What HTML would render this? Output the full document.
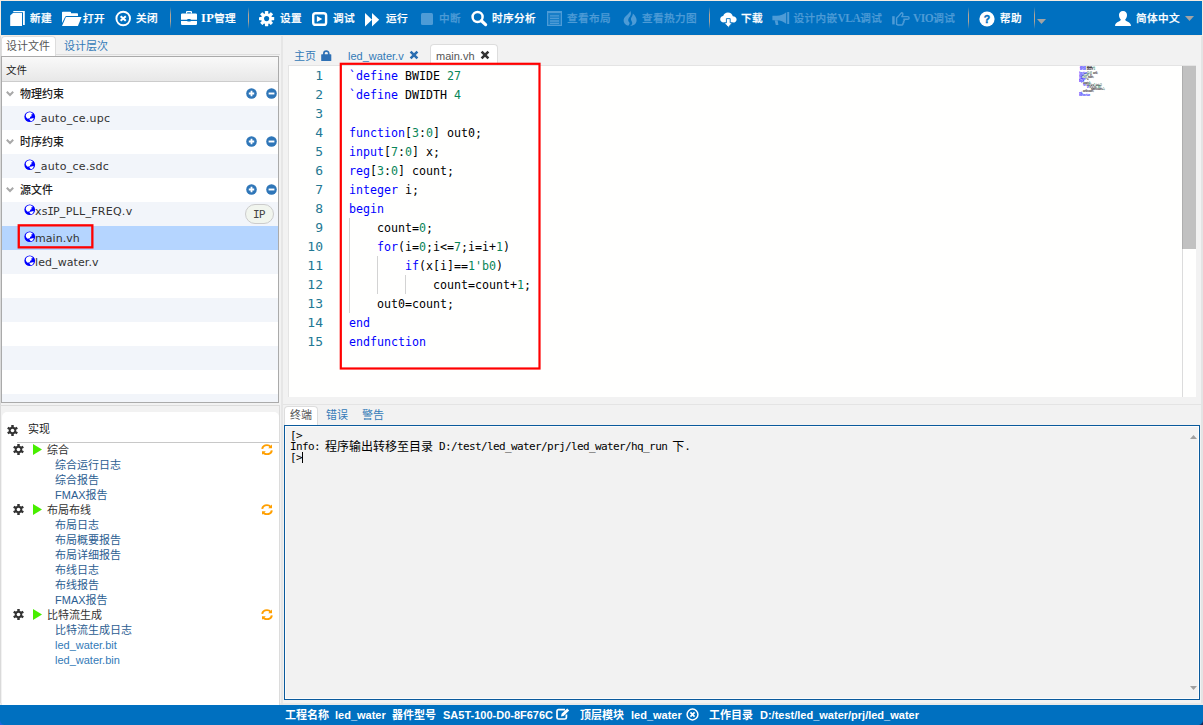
<!DOCTYPE html>
<html lang="zh-CN">
<head>
<meta charset="utf-8">
<title>IDE</title>
<style>
*{box-sizing:border-box;margin:0;padding:0}
html,body{width:1203px;height:725px;overflow:hidden;background:#f2f2f2}
body{position:relative;font-family:"Liberation Sans","Noto Sans CJK SC",sans-serif;font-size:11px;color:#222}
.abs{position:absolute}
.t{position:absolute;white-space:nowrap;line-height:14px;height:14px}
/* toolbar */
#tb{position:absolute;left:1px;top:1px;width:1201px;height:34px;background:#0070c0}
#tb .t{color:#fff;font-weight:500;top:10px;font-size:10.6px;letter-spacing:0.4px;-webkit-text-stroke:0.25px #fff}
#tb .t.dis{-webkit-text-stroke:0.25px #4d9bd6}
#tb .t.dis{color:#4d9bd6}
#tb .sep{position:absolute;top:6px;width:1px;height:22px;background:linear-gradient(rgba(179,165,149,0),#b3a595 35%,#b3a595 65%,rgba(179,165,149,0))}
#tb svg{position:absolute;overflow:visible}
.serif{font-family:"Liberation Serif",serif}
/* left top */
#ltab1{left:1px;top:36px;width:55px;height:21px;background:#fff;border:1px solid #ddd;border-bottom:none;border-radius:4px 4px 0 0}
.link{color:#337ab7}
#fp{left:1px;top:56px;width:278px;height:347px;border:1px solid #aaa;background:#fff;overflow:hidden}
#fp .hd{position:absolute;left:0;top:0;width:100%;height:25px;background:linear-gradient(#f9f9f9,#e8e8e8);border-bottom:1px solid #ccc}
#fp .row{position:absolute;left:0;width:100%;height:24px}
#fp .alt{background:#f2f5fa}
#fp .sel{background:#b5d5ff}
#fp .g{position:absolute;left:18px;top:5px;font-weight:500;color:#222}
#fp .f{position:absolute;top:6px;letter-spacing:0.28px;font-family:"DejaVu Sans","Noto Sans CJK SC",sans-serif;font-size:11px;color:#333;white-space:nowrap;line-height:14px}
#fp svg{position:absolute}
/* impl */
#ip{left:2px;top:412px;width:277px;height:295px;background:#fff;border-radius:5px 5px 0 0}
#ip .t{font-size:11px}
.dk{color:#2b5d91}
/* editor */
#ed{left:289px;top:66px;width:907px;height:331px;background:#fffffe;overflow:hidden}
.ln{position:absolute;left:0;width:34px;text-align:right;color:#237893}
.code,.ln{font-family:"DejaVu Sans Mono","Liberation Mono",monospace;font-size:13px;line-height:19px;height:19px;white-space:pre}
.code{position:absolute;left:60px;color:#000;transform-origin:0 0;transform:scaleX(0.8944)}
.mm{transform:scale(0.128,0.2) !important;line-height:13px;height:13px;font-weight:bold}
.vi{font-family:"DejaVu Sans Mono",monospace;letter-spacing:-0.9px;margin-left:-0.6px}
.k{color:#0000ff}.n{color:#098658}
.ig{position:absolute;width:1px;background:#d3d3d3}
/* terminal */
#term{left:284px;top:425px;width:916px;height:275px;border:1px solid #0a5a9c;background:#f2f2f2;box-shadow:inset 0 0 0 1px #fcfcfc}
.tm{position:absolute;left:5px;font-family:"DejaVu Sans Mono","Noto Sans CJK SC",monospace;font-size:11px;letter-spacing:-0.62px;line-height:11px;height:11px;white-space:pre;color:#000}
.tm .c{font-size:12px;letter-spacing:0;margin-left:-1px;font-weight:400;line-height:11px;font-family:"Noto Sans CJK SC",sans-serif;display:inline-block;vertical-align:top;height:11px;margin-top:-1px}
/* status */
#sb{left:0;top:705px;width:1203px;height:20px;background:#0070c0}
#sb .t{color:#fff;font-weight:bold;top:3px}
</style>
</head>
<body>
<svg width="0" height="0" style="position:absolute"><defs><g id="globe"><circle cx="6" cy="6" r="5.6" fill="#0000ff"/><path d="M2,3.9 C2.6,2 4.6,1 6.5,1.3 C7.8,1.5 8.8,2.3 9.3,3.2 L7.3,3.9 L8.2,5.1 L6.5,6.1 L6.1,7.6 L3.7,8 C2.2,7 1.5,5.4 2,3.9 z M5.5,8.4 L10.1,7.3 C10,9.1 8.8,10.4 7,10.8 z" fill="#fff"/></g></defs></svg>
<!-- outer frame -->
<div class="abs" style="left:0;top:0;width:1203px;height:1px;background:#f5ebe1"></div>
<div class="abs" style="left:0;top:0;width:1px;height:36px;background:#f5ebe1"></div>
<div class="abs" style="left:0;top:36px;width:1px;height:669px;background:#dadada"></div>
<div class="abs" style="left:1202px;top:0;width:1px;height:36px;background:#f5ebe1"></div>
<div class="abs" style="left:1px;top:35px;width:1201px;height:1px;background:#f5ebe1"></div>
<div class="abs" style="left:1201px;top:36px;width:2px;height:669px;background:#e4e4e4"></div>
<div class="abs" style="left:0;top:703px;width:1203px;height:2px;background:#e9e9e9"></div>
<div class="abs" style="left:282px;top:404px;width:919px;height:1px;background:#e4e4e4"></div>

<div id="tb">
<!-- new -->
<svg style="left:9px;top:10px" width="16" height="16" viewBox="0 0 16 16"><path d="M3.3,0 H14.8 V14 H13 V1.3 H3.3 z" fill="#fff"/><path d="M0.2,4.6 L3,2.1 H12 V15 H0.2 z" fill="#fff"/></svg>
<div class="t" style="left:29px">新建</div>
<!-- open -->
<svg style="left:60px;top:10px" width="22" height="16" viewBox="0 0 22 16"><path d="M1,1.6 Q1,0.8 1.8,0.8 H9.2 Q10,0.8 10,1.6 V2.3 H16.2 Q17,2.3 17,3.1 V4.9 H5.6 Q4.6,4.9 4.2,5.7 L1,12 z" fill="#fff"/><path d="M4.9,6 H20.6 L16.9,15 H1 z" fill="#fff"/></svg>
<div class="t" style="left:82px">打开</div>
<!-- close -->
<svg style="left:114px;top:10px" width="17" height="16" viewBox="0 0 17 16"><circle cx="8.2" cy="7.5" r="6.8" fill="none" stroke="#fff" stroke-width="1.9"/><path d="M5.6,5.3 L10.8,9.7 M10.8,5.3 L5.6,9.7" stroke="#fff" stroke-width="2.1" fill="none"/></svg>
<div class="t" style="left:135px">关闭</div>
<div class="sep" style="left:169px"></div>
<!-- briefcase -->
<svg style="left:180px;top:10px" width="16" height="15" viewBox="0 0 16 15"><path d="M5,2.6 V1 Q5,0 6,0 H10 Q11,0 11,1 V2.6 H9.8 V1.2 H6.2 V2.6 z" fill="#fff"/><path d="M1.2,2.4 H14.8 Q16,2.4 16,3.6 V8.8 H9.6 V8 H6.4 V8.8 H0 V3.6 Q0,2.4 1.2,2.4 z" fill="#fff"/><path d="M0,10 H6.4 V10.6 H9.6 V10 H16 V12.8 Q16,14 14.8,14 H1.2 Q0,14 0,12.8 z" fill="#fff"/></svg>
<div class="t" style="left:200px"><span class="serif" style="font-size:12.5px;font-weight:bold;letter-spacing:0.3px;-webkit-text-stroke:0">IP</span>管理</div>
<div class="sep" style="left:247px"></div>
<!-- gear -->
<svg style="left:258.3px;top:10px" width="15.2" height="15.2" viewBox="-8 -8 16 16"><g fill="#fff"><circle r="5.7"/><rect x="-1.75" y="-8" width="3.5" height="16" rx="0.5"/><rect x="-1.75" y="-8" width="3.5" height="16" rx="0.5" transform="rotate(45)"/><rect x="-1.75" y="-8" width="3.5" height="16" rx="0.5" transform="rotate(90)"/><rect x="-1.75" y="-8" width="3.5" height="16" rx="0.5" transform="rotate(135)"/></g><circle r="2.7" fill="#0070c0"/></svg>
<div class="t" style="left:279px">设置</div>
<!-- debug -->
<svg style="left:311px;top:11px" width="16" height="14" viewBox="0 0 16 14"><rect x="1.2" y="1.2" width="12.9" height="11.6" rx="2.4" fill="none" stroke="#fff" stroke-width="2.4"/><path d="M4.9,3.9 L10.3,7 L4.9,10.1 z" fill="#fff"/></svg>
<div class="t" style="left:332px">调试</div>
<!-- run -->
<svg style="left:364px;top:11px" width="15" height="15" viewBox="0 0 15 15"><path d="M0,1 L7,7.7 L0,14.4 z M7,1 L14.2,7.7 L7,14.4 z" fill="#fff"/></svg>
<div class="t" style="left:385px">运行</div>
<!-- stop -->
<svg style="left:420px;top:12px" width="12" height="12" viewBox="0 0 12 12"><rect x="0" y="0" width="12" height="12" rx="1.5" fill="#4d9bd6"/></svg>
<div class="t dis" style="left:438px">中断</div>
<!-- search -->
<svg style="left:470px;top:10px" width="17" height="16" viewBox="0 0 17 16"><circle cx="6.6" cy="6" r="5" fill="none" stroke="#fff" stroke-width="2.5"/><path d="M10.4,9.8 L14.6,13.6" stroke="#fff" stroke-width="3.2" stroke-linecap="round"/></svg>
<div class="t" style="left:491px">时序分析</div>
<!-- layout -->
<svg style="left:546px;top:10px" width="15" height="15" viewBox="0 0 15 15"><rect x="0.6" y="0.6" width="13.8" height="13.8" fill="rgba(77,155,214,0.3)" stroke="#4d9bd6" stroke-width="1.2"/><rect x="0" y="0" width="15" height="2" fill="#4d9bd6"/><path d="M3,4.8 H12 M3,7.4 H12 M3,10 H12 M3,12.4 H12" stroke="#4d9bd6" stroke-width="1.3"/></svg>
<div class="t dis" style="left:566px">查看布局</div>
<!-- flame -->
<svg style="left:621.5px;top:10px" width="14" height="15" viewBox="0 0 14 15"><path d="M7.4,0 C8.8,2.6 7.6,4.8 6,6.8 C4.8,8.4 5,10.2 6.4,11.6 C6.9,12.6 6.4,13.8 5.2,14.7 C2.4,14 0.4,11.8 0.6,9 C0.8,6.2 3.2,5 4.8,3.2 C5.8,2.2 6.6,1.2 7.4,0 z" fill="#4d9bd6"/><path d="M9.8,2.4 C12.2,4.4 13.8,7 13.6,9.8 C13.4,12.8 10.6,14.9 7,15 C9.2,13.6 9.8,12 8.8,10.4 C7.8,9 7.6,7.6 8.6,6 C9.4,4.8 9.9,3.6 9.8,2.4 z" fill="#4d9bd6"/></svg>
<div class="t dis" style="left:641px">查看热力图</div>
<div class="sep" style="left:708px"></div>
<!-- cloud download -->
<svg style="left:719px;top:10.9px" width="17" height="16" viewBox="0 0 17 16"><path d="M4,10.6 C1.6,10.6 0.2,9 0.2,7.2 C0.2,5.4 1.5,4.1 3.2,3.9 C3.8,1.7 5.7,0.4 7.9,0.4 C10.4,0.4 12.3,2 12.8,4.2 C15,4.3 16.6,5.6 16.6,7.5 C16.6,9.4 15.1,10.6 13,10.6 z" fill="#fff"/><path d="M6.4,6.6 H10.2 V10.8 H12.4 L8.3,15.4 L4.2,10.8 H6.4 z" fill="#fff" stroke="#0070c0" stroke-width="0.9"/></svg>
<div class="t" style="left:740px">下载</div>
<!-- megaphone -->
<svg style="left:771px;top:11px" width="18" height="14" viewBox="0 0 18 14"><path d="M0.4,3.8 H4.6 C8.6,3.6 11.8,2.2 14.2,0.2 V11.8 C11.8,9.8 8.6,8.4 4.6,8.2 H0.4 z" fill="#4d9bd6"/><path d="M2.6,8.2 L3.8,13 H6.4 L5.6,8.2 z" fill="#4d9bd6"/><rect x="15.2" y="0" width="2" height="12" fill="#4d9bd6"/></svg>
<div class="t dis" style="left:792.5px">设计内嵌<span class="serif" style="font-size:11.5px;font-weight:bold;letter-spacing:-0.5px;-webkit-text-stroke:0">VLA</span>调试</div>
<!-- hand -->
<svg style="left:891px;top:11px" width="18" height="14" viewBox="0 0 18 14"><rect x="0.2" y="4.2" width="2.5" height="8.2" fill="#4d9bd6"/><path d="M4.6,6 C6.2,5 7.6,2.6 9.6,0.8 C11.4,1 11.2,2.8 9.8,4.6 H15.6 C17.6,4.6 17.6,7.2 15.6,7.2 H11.8 C12.8,7.6 12.6,9.2 11.4,9.3 C12.2,9.9 11.8,11.3 10.8,11.3 C11.3,12 10.8,13 9.8,13 H6.6 C5.8,13 5.2,12.5 4.6,12.3 z" fill="none" stroke="#4d9bd6" stroke-width="1.4" stroke-linejoin="round"/></svg>
<div class="t dis" style="left:912px"><span class="serif" style="font-size:11.5px;font-weight:bold;letter-spacing:-0.5px;-webkit-text-stroke:0">VIO</span>调试</div>
<div class="sep" style="left:967px"></div>
<!-- help -->
<svg style="left:978px;top:9.6px" width="16" height="16" viewBox="0 0 16 16"><circle cx="8" cy="8" r="7.6" fill="#fff"/><text x="8" y="12" text-anchor="middle" font-family="Liberation Sans, sans-serif" font-weight="bold" font-size="10.5" fill="#0070c0" stroke="#0070c0" stroke-width="0.4">?</text></svg>
<div class="t" style="left:999px">帮助</div>
<div class="sep" style="left:1033px"></div>
<svg style="left:1036px;top:18px" width="9" height="5" viewBox="0 0 9 5"><path d="M0,0 H9 L4.5,5 z" fill="#a3a3a3"/></svg>
<!-- user -->
<svg style="left:1114px;top:10px" width="16" height="15" viewBox="0 0 16 15"><path d="M8,0 C10.6,0 12,1.7 12,4.1 C12,6.1 11.1,7.7 10.2,8.5 C10.2,9.4 10.7,9.8 12.2,10.5 C14.5,11.5 15.8,12.4 16,15 H0 C0.2,12.4 1.5,11.5 3.8,10.5 C5.3,9.8 5.8,9.4 5.8,8.5 C4.9,7.7 4,6.1 4,4.1 C4,1.7 5.4,0 8,0 z" fill="#fff"/></svg>
<div class="t" style="left:1135px">简体中文</div>
<svg style="left:1184px;top:15px" width="9" height="5" viewBox="0 0 9 5"><path d="M0,0 H9 L4.5,5 z" fill="#a3a3a3"/></svg>
</div>


<!-- left top tabs -->
<div id="ltab1" class="abs"></div>
<div class="t" style="left:6px;top:39px;color:#555">设计文件</div>
<div class="t link" style="left:64px;top:39px">设计层次</div>

<div id="fp" class="abs">
<div class="hd"><div class="t" style="left:4px;top:6px;color:#222;font-size:10.5px">文件</div></div>
<div class="row" style="top:25px"><svg class="chev" style="left:3.5px;top:9px" width="8" height="6" viewBox="0 0 8 6"><path d="M0.8,0.8 L4,4 L7.2,0.8" fill="none" stroke="#a8a8a8" stroke-width="2"/></svg><div class="g t">物理约束</div><svg style="left:244px;top:6px" width="11" height="11" viewBox="0 0 11 11"><circle cx="5.5" cy="5.5" r="5.3" fill="#2f76b8"/><path d="M5.5,2.8 V8.2 M2.8,5.5 H8.2" stroke="#fff" stroke-width="1.8"/></svg><svg style="left:264px;top:6px" width="11" height="11" viewBox="0 0 11 11"><circle cx="5.5" cy="5.5" r="5.3" fill="#2f76b8"/><path d="M2.6,5.5 H8.4" stroke="#fff" stroke-width="1.9"/></svg></div>
<div class="row alt" style="top:49px"><svg style="left:22px;top:5.3px" width="11.5" height="11.5" viewBox="0 0 12 12"><use href="#globe"/></svg><div class="f" style="left:33px">_auto_ce.upc</div></div>
<div class="row" style="top:73px"><svg class="chev" style="left:3.5px;top:9px" width="8" height="6" viewBox="0 0 8 6"><path d="M0.8,0.8 L4,4 L7.2,0.8" fill="none" stroke="#a8a8a8" stroke-width="2"/></svg><div class="g t">时序约束</div><svg style="left:244px;top:6px" width="11" height="11" viewBox="0 0 11 11"><circle cx="5.5" cy="5.5" r="5.3" fill="#2f76b8"/><path d="M5.5,2.8 V8.2 M2.8,5.5 H8.2" stroke="#fff" stroke-width="1.8"/></svg><svg style="left:264px;top:6px" width="11" height="11" viewBox="0 0 11 11"><circle cx="5.5" cy="5.5" r="5.3" fill="#2f76b8"/><path d="M2.6,5.5 H8.4" stroke="#fff" stroke-width="1.9"/></svg></div>
<div class="row alt" style="top:97px"><svg style="left:22px;top:5.3px" width="11.5" height="11.5" viewBox="0 0 12 12"><use href="#globe"/></svg><div class="f" style="left:33px">_auto_ce.sdc</div></div>
<div class="row" style="top:121px"><svg class="chev" style="left:3.5px;top:9px" width="8" height="6" viewBox="0 0 8 6"><path d="M0.8,0.8 L4,4 L7.2,0.8" fill="none" stroke="#a8a8a8" stroke-width="2"/></svg><div class="g t">源文件</div><svg style="left:244px;top:6px" width="11" height="11" viewBox="0 0 11 11"><circle cx="5.5" cy="5.5" r="5.3" fill="#2f76b8"/><path d="M5.5,2.8 V8.2 M2.8,5.5 H8.2" stroke="#fff" stroke-width="1.8"/></svg><svg style="left:264px;top:6px" width="11" height="11" viewBox="0 0 11 11"><circle cx="5.5" cy="5.5" r="5.3" fill="#2f76b8"/><path d="M2.6,5.5 H8.4" stroke="#fff" stroke-width="1.9"/></svg></div>
<div class="row alt" style="top:145px"><svg style="left:22px;top:2.3px" width="11.5" height="11.5" viewBox="0 0 12 12"><use href="#globe"/></svg><div class="f" style="left:33px;top:3px">xs<span class="vi">I</span>P_PLL_FREQ.v</div><div class="abs" style="left:243px;top:2px;width:29px;height:20px;border:1px solid #ccc;border-radius:10px;background:#f1f5ee;font-family:'DejaVu Sans',sans-serif;font-size:11px;line-height:20px;text-align:center;color:#444"><span class="vi">I</span>P</div></div>
<div class="row sel" style="top:169px"><svg style="left:22px;top:5.3px" width="11.5" height="11.5" viewBox="0 0 12 12"><use href="#globe"/></svg><div class="f" style="left:33px;letter-spacing:0.05px">main.vh</div></div>
<div class="row alt" style="top:193px"><svg style="left:22px;top:5.3px" width="11.5" height="11.5" viewBox="0 0 12 12"><use href="#globe"/></svg><div class="f" style="left:33px;letter-spacing:0.09px">led_water.v</div></div>
<div class="row alt" style="top:241px"></div>
<div class="row alt" style="top:289px"></div>
<div class="row alt" style="top:337px"></div>
<svg class="abs" style="left:8px;top:160px" width="100" height="40" viewBox="10 217 100 40"><rect x="18.75" y="225.35" width="73.6" height="22" fill="none" stroke="#ff0000" stroke-width="2.3"/></svg>
</div>


<!-- splitters -->
<div class="abs" style="left:281px;top:36px;width:2px;height:669px;background:#e6e6e6"></div>
<div class="abs" style="left:56px;top:54px;width:224px;height:1px;background:#dedede"></div>
<div class="abs" style="left:0;top:405px;width:280px;height:1px;background:#dcdcdc"></div>

<div id="ip" class="abs">
<svg style="position:absolute;left:5px;top:13px" width="11" height="11" viewBox="-8 -8 16 16"><g fill="#333"><circle r="5.4"/><rect x="-1.8" y="-8" width="3.6" height="16"/><rect x="-1.8" y="-8" width="3.6" height="16" transform="rotate(60)"/><rect x="-1.8" y="-8" width="3.6" height="16" transform="rotate(120)"/></g><circle r="2.6" fill="#fff"/></svg>
<div class="t" style="left:26px;top:10px;color:#222">实现</div>
<div class="abs" style="left:15px;top:30px;width:263px;height:1px;background:#c8c8c8"></div>
<svg style="position:absolute;left:11px;top:32px" width="11" height="11" viewBox="-8 -8 16 16"><g fill="#333"><circle r="5.4"/><rect x="-1.8" y="-8" width="3.6" height="16"/><rect x="-1.8" y="-8" width="3.6" height="16" transform="rotate(60)"/><rect x="-1.8" y="-8" width="3.6" height="16" transform="rotate(120)"/></g><circle r="2.6" fill="#fff"/></svg>
<svg style="position:absolute;left:31px;top:32px" width="9" height="11" viewBox="0 0 9 11"><path d="M0,0 L9,5.5 L0,11 z" fill="#48ee00"/></svg>
<div class="t" style="left:45px;top:31px;color:#333">综合</div>
<svg style="position:absolute;left:259px;top:32px" width="12" height="11.4" viewBox="0 0 12 12" preserveAspectRatio="none"><g fill="none" stroke="#ff9f00" stroke-width="2"><path d="M1.2,5.2 C1.6,2.8 3.6,1.2 6,1.2 C7.6,1.2 8.8,1.9 9.7,3"/><path d="M10.8,6.8 C10.4,9.2 8.4,10.8 6,10.8 C4.4,10.8 3.2,10.1 2.3,9"/></g><path d="M11,0.6 V4.4 H7.2 z" fill="#ff9f00"/><path d="M1,11.4 V7.6 H4.8 z" fill="#ff9f00"/></svg>
<div class="t dk" style="left:53px;top:46px">综合运行日志</div>
<div class="t dk" style="left:53px;top:61px">综合报告</div>
<div class="t dk" style="left:53px;top:76px">FMAX报告</div>
<svg style="position:absolute;left:11px;top:92px" width="11" height="11" viewBox="-8 -8 16 16"><g fill="#333"><circle r="5.4"/><rect x="-1.8" y="-8" width="3.6" height="16"/><rect x="-1.8" y="-8" width="3.6" height="16" transform="rotate(60)"/><rect x="-1.8" y="-8" width="3.6" height="16" transform="rotate(120)"/></g><circle r="2.6" fill="#fff"/></svg>
<svg style="position:absolute;left:31px;top:92px" width="9" height="11" viewBox="0 0 9 11"><path d="M0,0 L9,5.5 L0,11 z" fill="#48ee00"/></svg>
<div class="t" style="left:45px;top:91px;color:#333">布局布线</div>
<svg style="position:absolute;left:259px;top:92px" width="12" height="11.4" viewBox="0 0 12 12" preserveAspectRatio="none"><g fill="none" stroke="#ff9f00" stroke-width="2"><path d="M1.2,5.2 C1.6,2.8 3.6,1.2 6,1.2 C7.6,1.2 8.8,1.9 9.7,3"/><path d="M10.8,6.8 C10.4,9.2 8.4,10.8 6,10.8 C4.4,10.8 3.2,10.1 2.3,9"/></g><path d="M11,0.6 V4.4 H7.2 z" fill="#ff9f00"/><path d="M1,11.4 V7.6 H4.8 z" fill="#ff9f00"/></svg>
<div class="t dk" style="left:53px;top:106px">布局日志</div>
<div class="t dk" style="left:53px;top:121px">布局概要报告</div>
<div class="t dk" style="left:53px;top:136px">布局详细报告</div>
<div class="t dk" style="left:53px;top:151px">布线日志</div>
<div class="t dk" style="left:53px;top:166px">布线报告</div>
<div class="t dk" style="left:53px;top:181px">FMAX报告</div>
<svg style="position:absolute;left:11px;top:197px" width="11" height="11" viewBox="-8 -8 16 16"><g fill="#333"><circle r="5.4"/><rect x="-1.8" y="-8" width="3.6" height="16"/><rect x="-1.8" y="-8" width="3.6" height="16" transform="rotate(60)"/><rect x="-1.8" y="-8" width="3.6" height="16" transform="rotate(120)"/></g><circle r="2.6" fill="#fff"/></svg>
<svg style="position:absolute;left:31px;top:197px" width="9" height="11" viewBox="0 0 9 11"><path d="M0,0 L9,5.5 L0,11 z" fill="#48ee00"/></svg>
<div class="t" style="left:45px;top:196px;color:#333">比特流生成</div>
<svg style="position:absolute;left:259px;top:197px" width="12" height="11.4" viewBox="0 0 12 12" preserveAspectRatio="none"><g fill="none" stroke="#ff9f00" stroke-width="2"><path d="M1.2,5.2 C1.6,2.8 3.6,1.2 6,1.2 C7.6,1.2 8.8,1.9 9.7,3"/><path d="M10.8,6.8 C10.4,9.2 8.4,10.8 6,10.8 C4.4,10.8 3.2,10.1 2.3,9"/></g><path d="M11,0.6 V4.4 H7.2 z" fill="#ff9f00"/><path d="M1,11.4 V7.6 H4.8 z" fill="#ff9f00"/></svg>
<div class="t dk" style="left:53px;top:211px">比特流生成日志</div>
<div class="t link" style="left:53px;top:226px">led_water.bit</div>
<div class="t link" style="left:53px;top:241px">led_water.bin</div>
</div>

<div class="abs" style="left:279px;top:405px;width:1px;height:300px;background:#dcdcdc"></div>
<div id="edtabs">
<div class="t link" style="left:294px;top:49px">主页</div>
<svg class="abs" style="left:321px;top:50px" width="11" height="11" viewBox="0 0 11 11"><path d="M2.9,5 V3.2 C2.9,0.4 7.7,0.4 7.7,3.2 V5" fill="none" stroke="#2e70b4" stroke-width="1.7"/><rect x="0.2" y="4.2" width="10.1" height="6.8" rx="0.6" fill="#2e70b4"/></svg>
<div class="t link" style="left:348px;top:49px">led_water.v</div>
<svg class="abs" style="left:409px;top:50px" width="10" height="10" viewBox="0 0 10 10"><path d="M1.6,1.6 L8.4,8.4 M8.4,1.6 L1.6,8.4" stroke="#2a6db0" stroke-width="2.6"/></svg>
<div class="abs" style="left:430px;top:44px;width:68px;height:22px;background:#fff;border:1px solid #ddd;border-bottom:none;border-radius:4px 4px 0 0"></div>
<div class="t" style="left:436px;top:49px;color:#555">main.vh</div>
<svg class="abs" style="left:480px;top:50px" width="10" height="10" viewBox="0 0 10 10"><path d="M1.6,1.6 L8.4,8.4 M8.4,1.6 L1.6,8.4" stroke="#333" stroke-width="2.6"/></svg>
</div>
<div class="abs" style="left:288px;top:65px;width:908px;height:332px;background:#e4e4e4"></div>
<div id="ed" class="abs">
<div class="ln" style="top:0px">1</div><div class="code" style="top:0px"><span class="k">`define</span> BWIDE <span class="n">27</span></div>
<div class="ln" style="top:19px">2</div><div class="code" style="top:19px"><span class="k">`define</span> DWIDTH <span class="n">4</span></div>
<div class="ln" style="top:38px">3</div><div class="code" style="top:38px"></div>
<div class="ln" style="top:57px">4</div><div class="code" style="top:57px"><span class="k">function</span>[<span class="n">3</span>:<span class="n">0</span>] out0;</div>
<div class="ln" style="top:76px">5</div><div class="code" style="top:76px"><span class="k">input</span>[<span class="n">7</span>:<span class="n">0</span>] x;</div>
<div class="ln" style="top:95px">6</div><div class="code" style="top:95px"><span class="k">reg</span>[<span class="n">3</span>:<span class="n">0</span>] count;</div>
<div class="ln" style="top:114px">7</div><div class="code" style="top:114px"><span class="k">integer</span> i;</div>
<div class="ln" style="top:133px">8</div><div class="code" style="top:133px"><span class="k">begin</span></div>
<div class="ln" style="top:152px">9</div><div class="code" style="top:152px">    count=<span class="n">0</span>;</div>
<div class="ln" style="top:171px">10</div><div class="code" style="top:171px">    <span class="k">for</span>(i=<span class="n">0</span>;i&lt;=<span class="n">7</span>;i=i+<span class="n">1</span>)</div>
<div class="ln" style="top:190px">11</div><div class="code" style="top:190px">        <span class="k">if</span>(x[i]==<span class="n">1'b0</span>)</div>
<div class="ln" style="top:209px">12</div><div class="code" style="top:209px">            count=count+<span class="n">1</span>;</div>
<div class="ln" style="top:228px">13</div><div class="code" style="top:228px">    out0=count;</div>
<div class="ln" style="top:247px">14</div><div class="code" style="top:247px"><span class="k">end</span></div>
<div class="ln" style="top:266px">15</div><div class="code" style="top:266px"><span class="k">endfunction</span></div>
<div class="ig" style="left:60px;top:152px;height:95px"></div>
<div class="ig" style="left:88px;top:190px;height:38px"></div>
<div class="ig" style="left:116px;top:209px;height:19px"></div>
<div class="abs" style="left:790px;top:0;width:40px;height:32px;font-weight:bold"><div class="code mm" style="left:0;top:0px"><span class="k">`define</span> BWIDE <span class="n">27</span></div><div class="code mm" style="left:0;top:2px"><span class="k">`define</span> DWIDTH <span class="n">4</span></div><div class="code mm" style="left:0;top:4px"></div><div class="code mm" style="left:0;top:6px"><span class="k">function</span>[<span class="n">3</span>:<span class="n">0</span>] out0;</div><div class="code mm" style="left:0;top:8px"><span class="k">input</span>[<span class="n">7</span>:<span class="n">0</span>] x;</div><div class="code mm" style="left:0;top:10px"><span class="k">reg</span>[<span class="n">3</span>:<span class="n">0</span>] count;</div><div class="code mm" style="left:0;top:12px"><span class="k">integer</span> i;</div><div class="code mm" style="left:0;top:14px"><span class="k">begin</span></div><div class="code mm" style="left:0;top:16px">    count=<span class="n">0</span>;</div><div class="code mm" style="left:0;top:18px">    <span class="k">for</span>(i=<span class="n">0</span>;i&lt;=<span class="n">7</span>;i=i+<span class="n">1</span>)</div><div class="code mm" style="left:0;top:20px">        <span class="k">if</span>(x[i]==<span class="n">1'b0</span>)</div><div class="code mm" style="left:0;top:22px">            count=count+<span class="n">1</span>;</div><div class="code mm" style="left:0;top:24px">    out0=count;</div><div class="code mm" style="left:0;top:26px"><span class="k">end</span></div><div class="code mm" style="left:0;top:28px"><span class="k">endfunction</span></div></div>
<div class="abs" style="left:893px;top:0;width:1px;height:331px;background:#dcdcdc"></div>
<div class="abs" style="left:893px;top:0;width:14px;height:183px;background:#c1c1c1;border-left:1px solid #aeaeae"></div>
</div>
<svg class="abs" style="left:330px;top:55px" width="220" height="322" viewBox="330 55 220 322"><rect x="340.8" y="63.8" width="198.7" height="304.7" fill="none" stroke="#ff0000" stroke-width="2.2"/></svg>

<div id="btabs">
<div class="abs" style="left:284px;top:406px;width:34px;height:20px;background:#fff;border:1px solid #ddd;border-bottom:none;border-radius:4px 4px 0 0"></div>
<div class="t" style="left:290px;top:408px;color:#555">终端</div>
<div class="t link" style="left:326px;top:408px">错误</div>
<div class="t link" style="left:362px;top:408px">警告</div>
</div>
<div id="term" class="abs">
<div class="tm" style="top:4px">[&gt;</div>
<div class="tm" style="top:15px">Info: <span class="c">程序输出转移至目录</span> D:/test/led_water/prj/led_water/hq_run <span class="c">下</span>.</div>
<div class="tm" style="top:26px">[&gt;</div>
<div class="abs" style="left:17px;top:26px;width:1px;height:11px;background:#000"></div>
<svg class="abs" style="left:905px;top:9px" width="7" height="4" viewBox="0 0 7 4"><path d="M0,4 H7 L3.5,0 z" fill="#a0a0a0"/></svg>
<svg class="abs" style="left:905px;top:260px" width="7" height="4" viewBox="0 0 7 4"><path d="M0,0 H7 L3.5,4 z" fill="#a0a0a0"/></svg>
</div>

<div id="sb" class="abs">
<div class="t" style="left:285px">工程名称</div>
<div class="t" style="left:335px">led_water</div>
<div class="t" style="left:392px">器件型号</div>
<div class="t" style="left:443px">SA5T-100-D0-8F676C</div>
<svg class="abs" style="left:556px;top:3px" width="14" height="12" viewBox="0 0 14 12"><path d="M9,1.6 H2.6 Q1,1.6 1,3.2 V9.4 Q1,11 2.6,11 H8.8 Q10.4,11 10.4,9.4 V6.4" fill="none" stroke="#fff" stroke-width="1.7"/><path d="M5,8.4 L5.6,5.8 L11.2,0.4 L13.2,2.4 L7.6,7.9 z" fill="#fff"/></svg>
<div class="t" style="left:580px">顶层模块</div>
<div class="t" style="left:631px">led_water</div>
<svg class="abs" style="left:686px;top:3px" width="13" height="13" viewBox="0 0 13 13"><circle cx="6.5" cy="6.5" r="5.4" fill="none" stroke="#fff" stroke-width="1.5"/><path d="M4.4,4.4 L8.6,8.6 M8.6,4.4 L4.4,8.6" stroke="#fff" stroke-width="1.7"/></svg>
<div class="t" style="left:709px">工作目录</div>
<div class="t" style="left:760px">D:/test/led_water/prj/led_water</div>
<div class="abs" style="left:0;top:15px;width:5px;height:5px;background:radial-gradient(circle at 100% 0,#0070c0 4.5px,#1a66e0 5.5px)"></div>
<div class="abs" style="left:1198px;top:15px;width:5px;height:5px;background:radial-gradient(circle at 0 0,#0070c0 4.5px,#14285a 5.5px)"></div>
</div>
</body>
</html>
